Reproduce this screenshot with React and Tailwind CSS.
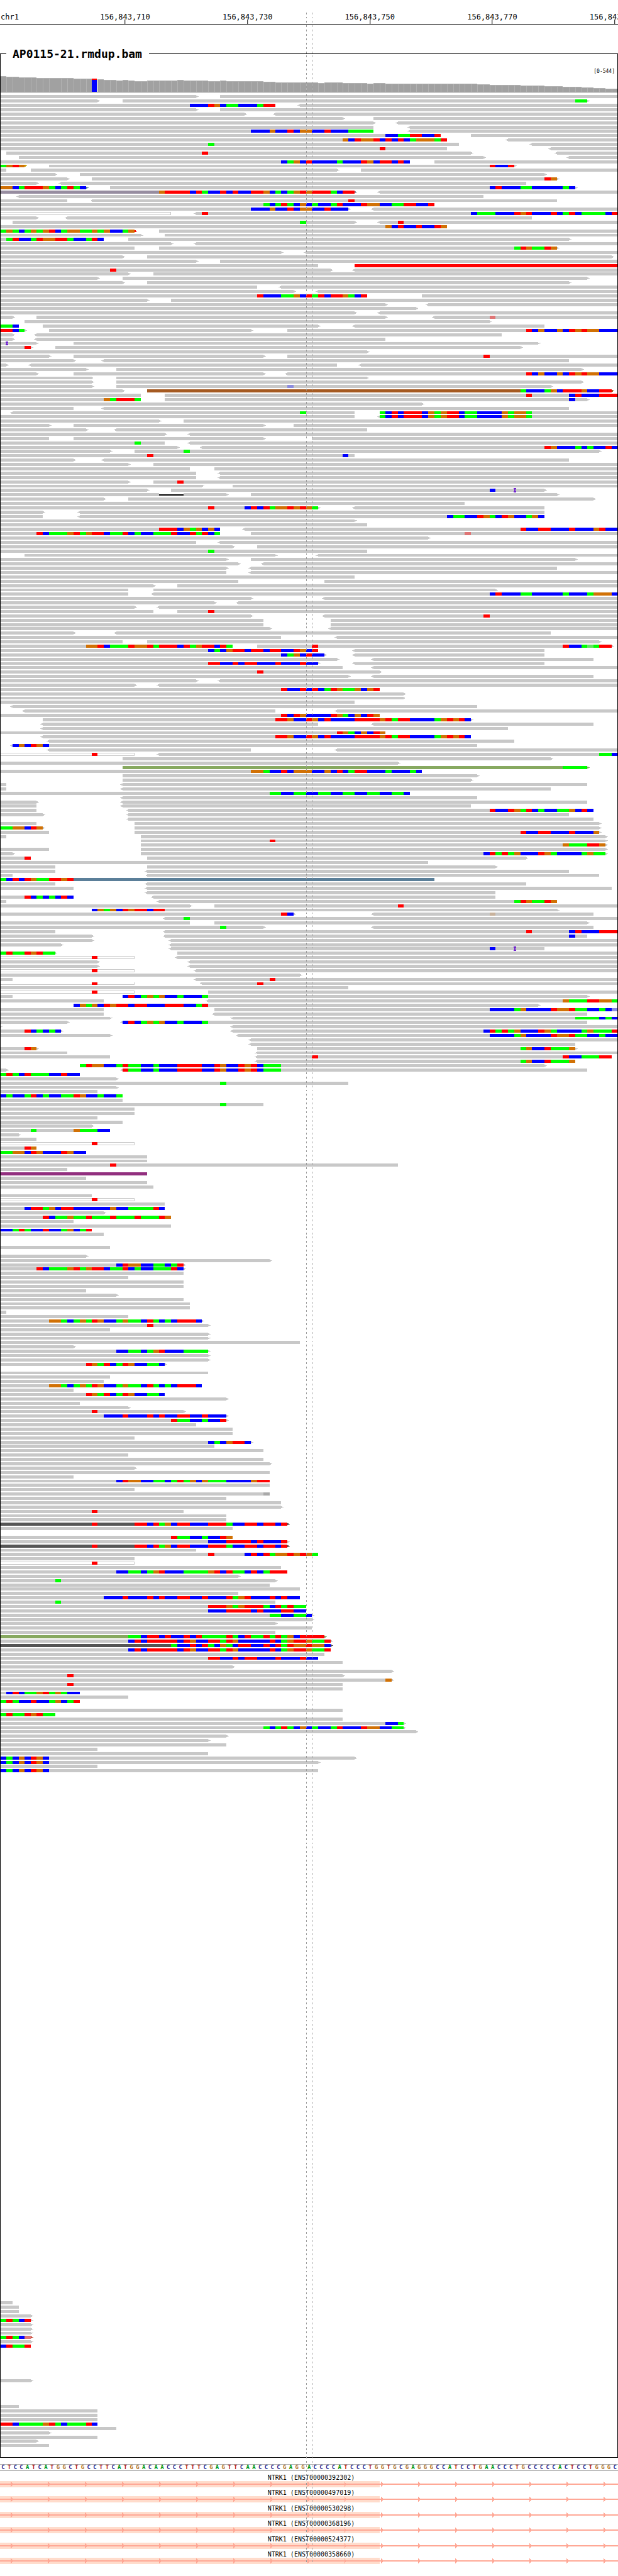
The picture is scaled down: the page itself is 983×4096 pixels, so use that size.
import React from "react";

const BASE = 9.9;
const BASES = 101;
const ROW = 7;
const READ_GREY = "#c8c8c8";

const NUCLEOTIDE = {
  A: "#00ff00",
  C: "#0000ff",
  G: "#d17105",
  T: "#ff0000",
  a: "#63e263",
  c: "#8c8cdf",
  g: "#c8b29c",
  t: "#df7575",
  n: "#a9a9a9",
};

const READ_COLOR = {
  k: "#555555",
  g: "#87a960",
  p: "#922f7f",
  m: "#978da0",
  o: "#a55a22",
  r: "#ff0000",
  s: "#5b7f99",
  y: "#c8a000",
  v: "#c8503a",
};

// Rows are separated by "/". Tokens inside a row:
//   [<]a-b[>]  read covering bases a..b, with strand arrows; an optional leading
//              letter picks a READ_COLOR ("h" is a hollow, low-quality read)
//   n:LETTERS  mismatches from base n; lower case is low base quality
//   in, da-b   insertion at n, deletion from a to b
const BLOCKS = [
  {
    first: 0,
    rows: `0-32> 36-101/0-16> 20-96> 94:AA/0-45 <49-101 31:CCCTGCAACCCATT/0-32> 36-101/0-40> <45-101
/0-56> 61-101/0-61> <65-101/0-61 <67-101/0-61 <67-101 41:CCCGCCTCGGCCTCCCAAAA/0-72 77-101 63:CCAATTCCT
/0-73 <83-101 56:GCTGGTCTCTCAGGGAT/0-75 <87-101 34:A/0-73 <90-101 62:T/1-77> <91-101 33:T/3-79> <93-101
/0-67 71-101 46:CAGCTCCCCACCCTGCTTCTC/y0-4> 8-84> 0:AGTG 80:TCCT/0-1 5-55> 59-101/0-9> 13-89>/0-11> 15-91> 89:TG
/0-6> <10-86/s0-14> 18-94> 0:GGCATTTGACATAC 80:CTCCCAACCCCCAC/m0-58> <62-101 26:GTTTTCTACCTCTCCTTGCACAGTGTTTACTT/<3-79/0-11 <15-91 57:T
/0-71 43:ACATACGCACCATCCCTGGCCAATTCCT/0-57> <61-101 41:CCCGCCTCGGCCTCCC/h0-28 <32-101 33:T 77:CAAACCCTGTCCCTCATCAAAACT/0-6> <11-87/2-58> <62-101 49:A 65:T
/0-73 63:GCTCCTCCTG/r0-22> 26-101 0:AGACAGAGTCAGGAAGAGCCAG/0-23> 27-101/0-17 21-93> 1:ATCCATGGTTACCATC/0-28> <32-101
/0-22 26-91> 84:ATGAATG/0-46> <50-101/0-20> 24-100>/0-32> 36-101/0-52 r58-101
/0-54> <58-101 18:T/0-21> 25-101/0-16> 20-96>/0-20> 24-93>/0-42 <46-101
/0-48> <52-101/0-60 69-101 42:TCCCAAGCTATCTTGACT/0-24> 28-101/0-63> <70-101/0-68>
/0-58> <62-101/0-2> 6-63> <71-101 80:t/4-80>/0-3 7-52> <58-89 0:AAC/0-4> 8-41> 47-101 0:TTCA 86:TCGCCGCTGTGGCCC
/0-2> <6-82/0-2> <6-63/0-6> 12-88> i1/0-5> 9-85> 4:T/0-60>
/0-8> 12-43> 47-101 79:T/0-12> <17-93/0-1> <5-55 <59-101/0-14> 19-95>/0-6> 12-43> <47-101 86:TCGCCGCTGTGGCCC
/0-15> 19-60>/0-15> 19-95>/0-15> 19-90> 47:c/0-20> o24-100> 85:ACCCAGCTTTGCCTT/0-23 27-101 86:T 93:CTCCCTTT
/0-23 27-96> 17:GATTTA 93:C/0-69>/0-12 <17-93/<2-58 62-101 49:A 62:ACTCTTTCGAGTTCAACCCCGAGGA/0-58 <62-101 62:ACTCTTTCGAGTTCAACCCCGAGGA
/0-26> 30-101/0-8> 12-43> 48-101/0-14> <19-60/0-27> <31-101/0-8 12-43> 51-101
/0-27 <31-101 22:A/0-29> <33-101 89:TGCCCACACCTC/0-18> 22-98> 30:A/0-58 24:T 56:C/0-12> <17-93
/0-21> 25-101/0-31 35-101/0-32 <36-101/0-32 <36-101/0-21> 25-101 29:T
/0-33> 38-101/0-24> 28-89> 80:C i84/0-26 30-37> 41-91> d26-30/0-17> 21-97>/0-76
/0-52> <58-89 34:T 40:CTCTAGGTGTGA/0-7> <13-89/0-7 <13-89 73:CAACCTGACTGCCAGC/0-58>/0-60
/0-36 <40-101 26:TTTCGAGCGC 85:TCCTTCCCTCCCGTCC/0-36 41-101 6:TCAAAGTAGTTCAATCACCAAATCCTATCA 76:t/0-70>/0-32 <36-101/0-38> 42-101
/0-60 34:A/4-45> <52-101/0-37> 41-94>/0-39> <43-101/0-37> <41-91
/0-37 <41-101/0-58/0-39 53-101/0-25> 29-101/0-21 25-81>
/0-21 <25-101 80:CTCCCAACCCCCACCCAGGGC/0-41> <53-101/0-35> <39-101/0-22> <26-101/0-25 29-101 34:T
/0-41> <53-101 79:T/0-43 54-101/0-43 54-101/0-44> <54-101/0-12> <19-90
/0-46 <55-101/0-20 24-98>/0-38 42-100> 14:GGTCAAATGGTATTTCTAGTTCTA 51:T 92:TCCAaATT/0-52 <58-89 34:CACGTTCTTCTTCCTGCT/0-53> <58-89 46:CAGCTCC
/0-55> <61-97/0-52> <58-89 34:TTCCTCTTCCCTCCCTCC/0-56 <61-101/0-62> 42:T/0-57> <61-97
/0-32> <36-101/0-22> <26-101/0-62 46:TCCTCTCATGAAGCGT/0-66>/0-66>
/0-58/<2-78/<4-45 <55-101/0-62 46:TCTGCCCCTGACGCTG/7-77> 45:TTGCCTGCTCCCCTTTTGTATTCCCCAGTGTC
/<7-52 <61-97/<7-83/0-63 55:TGACGCTG/<7-77 45:TTGCCTGCTCCCCTTTTGTATTCCCCAGTGTC/<8-84
/<2-78 2:CGCTGC/<8-41 <55-101/h0-22 <26-101 15:T 98:AAC/20-90>/0-65>
/g20-96> 92:AAAA/0-69 41:GGACCTCGGGCCGCTCATTCCCACCCAC/20-78>/20-77>/0-1 <20-96
/0-1 <20-90/0-67 44:AACCAACCAACCAACCAACCAAC/<20-78/0-6> <20-96/0-6 <20-77
/0-6 <21-97 80:TCCTGATCACCAAGCTC/0-7> <21-93/<21-97/0-6 22-98>/0-7> 22-98> 0:AAGGCTG
/0-8 22-98> 85:TCCTTCCCTCCCG/0-1 23-99>/23-99> 44:T/23-99> 92:GAAATTG/0-8 23-99>
/0-2> 23-99> 79:CTATAGCCCTGACCCCAGAA/0-5 24-86> 4:T/0-70/0-9 24-81>/0-9 <24-93
/0-2 <24-98/s0-71 0:ACTCTGAATTGT/0-9 <24-86/0-12 <24-100/<24-81
/0-12 <25-81 4:TCACACTC/0-1 <26-91 84:ATGAATG/0-31> 35-101 65:T/15-91> 15:CGAGCTGTTCTT/0-48> <61-97 46:TC 80:g
/<27-101 30:A/0-31 35-96>/0-43> <61-97 36:A/0-9 <27-101 86:T 93:CTCCCTTT/0-15> <27-96 93:C
/0-15> <28-101/0-10> <28-101/<28-89 80:C i84/0-9> 29-101 0:ATAATGTAA/h0-22 <29-101 15:T
/0-16> <31-101/0-16> <31-101/h0-22 <32-101 15:T/0-49>/0-2 <32-101 44:T
/h0-22 <33-101 15:T 42:T/0-57/h0-22 34-101 15:T/0-2 20-96> 20:CTCAGAGCCACCCA/0-17 <34-101 92:GAAATTGGA
/12-88> 12:CGAGCTGTTCTTCCCTTTCCAT/0-17 35-101 80:CCCCAGCCCCTGGTAACCACc/0-17 <35-96/0-18> <38-101 94:AAAACAC/0-11> <20-96 20:CTCAGAGCCACCCA
/0-0> <38-101/0-10> <38-101 4:TCACAC 79:CTATAGCCCTGACCCCAGAAAT/0-18> <39-101 80:CCCCAGCCCCTGGTAACCACC/<41-101/<41-94
/0-6> 42-94> 4:TG 85:AGCCTAAAG/0-11 <42-101/0-18 <42-100 51:T 92:TCCAAATT/<42-94 85:AGCCTAAAG/13-89> 13:ATGGCCATAACCACCCTTTTCCTGCCTGTCAAA
/0-1> <20-96 20:TAACCACCCTTTTCCTGCCTGTCAAA/0-13 0:ATACTAAACCTCC/0-19>/0-57 36:A/0-19>
/0-16/0-20 0:CACCATCACCAATGCCACCA/0-20/0-43 36:A/0-22
/0-22/0-16/0-20/0-15>/0-18 5:A 12:GAAACC
/0-3>/0-6/h0-22 15:T/0-6 4:TG/0-14 0:AAGGCTGCCCTGCC
/0-24/0-24/0-65 18:T/0-11/p0-24
/0-14/0-24/0-25//0-15
/h0-22 15:T/0-27/0-27 4:CTTAGCTTCCCCCCGCCAAAATC/0-17>/0-28 7:TCAAGAATAAATAAATAAATG
/0-12/0-28/0-15 0:CCATACCTCCAGCAT/0-17/
//0-18//0-14>/0-44>
/0-30> 19:CTGGCCAACAT/0-30> 6:TCAAAGTAGTTCAATCACCAAATC/0-30/0-21/0-30
/0-30/0-14/0-19>/0-30/0-31
/0-31/0-1/0-21/0-33> 8:GGACAGATGCCAGAACTACACTTTC/0-34> 24:T
/0-18/0-34>/0-34>/0-49/0-12>
/0-34> 19:CCAACAGTCCCAAAA/0-34>/0-34>/0-27> 14:TGATCATGCCAAC/
/0-34/0-18/0-17/0-33 8:GGACAGATGCCAGAACTACACTTTC/0-12
/0-27 14:TGATCATGCCAAC/0-37>/0-13/0-21>/0-30> 15:T
/0-37> 17:CCCTCCCTCTCCTTCCTCCC/0-37> 28:TAACCACCT/0-32/0-38/0-38
/0-22/0-41> 34:CACGTTC/0-35/0-43/0-21
/0-43/0-44>/0-22>/0-44/0-12
/0-44 19:CTGGCCAACATAGCGAAACCCCGTT/0-44/0-22/0-44 43:n/0-37
/0-46/0-46>/0-30 15:T/0-37/0-37
/k0-47> 15:T 22:TTCTAGCTTCCCTTTACCTTCTTCT/0-38//0-38 28:TAACCACCTG/0-47> 34:CCCTTTTCTCCCT
/k0-47> 15:T 22:TTCTAGCTTCCCTTTACCTTCTTCT/0-32/0-52 34:T 40:CTCTAGGTGTGA/0-22/h0-22 15:T
/0-46/0-47 19:CCAACAGTCCCAAAAGTCTAACTCATTT/0-39>/0-45> 9:A/0-44
/0-49/0-39/0-49 17:CCCTCCCTCTCCTTCCTCCCTAGTCCCTCTCC/0-45 9:A/0-50 34:TTTGAGTTTACTATAA
/0-50 34:CCCTTTTCTCCCTTCC/0-51> 44:AACCAAC/0-51>/0-45>/0-51
/0-45/g0-53> 21:AACTTCTCCTCTAAAATACTAATATAGCTTTT/0-54> 21:CTCTTTTTCTGCCTTATGCCCCCTCAGTTGAAT/k0-54> 28:ACCTCTACGACTTCCTCTATGGTGGC/0-54 21:CTCTTTTTCTGCCTTATGCCCCCTCAGTTGAAT
/0-53/0-52 34:TTCCTCTTCCCTCCCTCC/0-56/0-38>/0-64>
/0-56> 11:T/0-64> 63:G/0-56 11:T/0-56/0-13 1:CTCAAGTAGACC
/0-21/0-13 0:ATACCTCCAGCAT//0-56/0-9 0:ATAATGTAA
/0-56/0-66> 63:CCA/0-66> 43:ACATACGCACCATCCCTGGCCAA/0-68>/0-37>
/0-34>/0-37/0-16/0-34/0-58> 0:CACGCTGC
/0-52> 0:CACGCTGC/0-16/0-52 0:CACGCTGC`,
  },
  {
    first: 510,
    rows: `0-2/0-3/0-3/0-5>/0-5> 0:ATACT/0-5>/0-5>/0-5>/v0-5> 0:ATACt/0-5>
/0-5 0:CTAAT////////0-5>//////0-3/0-16/0-16/0-16/0-16 0:TTCAAAAGTACAAATC/0-19/0-8>/0-16/0-6>/0-8`,
  },
];

// Coverage heights as [height, number of bases].
const COVERAGE = [
  [25, 1], [24, 2], [23, 3], [22, 6], [21, 4], [20, 1], [19, 2], [18, 1], [19, 1], [18, 1],
  [17, 2], [18, 5], [19, 1], [18, 4], [17, 2], [18, 1], [17, 6], [16, 2], [15, 7], [14, 1],
  [15, 3], [14, 4], [13, 1], [14, 2], [13, 15], [12, 2], [11, 5], [10, 4], [9, 3], [8, 3],
  [7, 2], [6, 2], [5, 2],
].flatMap(([h, n]) => Array(n).fill(h));

const REFERENCE =
  "CTCCATCATGGCTGCCTTCATGGACAACCCTTTCGAGTTCAACCCCGAGGACCCCATCCCTGGTGCGAGGGCCATCCTGAACCCTGCCCCCACTCCTGGGC";

const LETTER_CLASS = {
  A: "text-[#009a1a]",
  C: "text-[#1a1a8c]",
  G: "text-[#b0701a]",
  T: "text-[#b01414]",
};

const TICKS = [
  { label: "156,843,710", at: 20.25 },
  { label: "156,843,730", at: 40.05 },
  { label: "156,843,750", at: 59.85 },
  { label: "156,843,770", at: 79.65 },
  { label: "156,843,790", at: 99.45 },
];

const TRANSCRIPTS = [
  "ENST00000392302",
  "ENST00000497019",
  "ENST00000530298",
  "ENST00000368196",
  "ENST00000524377",
  "ENST00000358660",
];

function toX(base) {
  return Math.round(base * BASE);
}

function drawToken(token, y, key) {
  const mismatch = token.match(/^(\d+):([A-Za-z]+)$/);
  if (mismatch) {
    const runs = mismatch[2].match(/(.)\1*/g);
    let at = Number(mismatch[1]);
    return runs.map((run, i) => {
      const x = toX(at);
      at += run.length;
      return <rect key={key + "-" + i} x={x} y={y} width={toX(at) - x} height="5" fill={NUCLEOTIDE[run[0]]} />;
    });
  }
  const insertion = token.match(/^i(\d+)$/);
  if (insertion) {
    const x = toX(Number(insertion[1])) + 1;
    return <path key={key} d={`M${x - 2} ${y - 1}h4v2h-1v3h1v2h-4v-2h1v-3h-1z`} fill="#7022d0" />;
  }
  const deletion = token.match(/^d(\d+)-(\d+)$/);
  if (deletion) {
    const x = toX(Number(deletion[1]));
    return <rect key={key} x={x} y={y + 2} width={toX(Number(deletion[2])) - x} height="2" fill="#000" />;
  }
  const [, kind, left, from, to, right] = token.match(/^([a-z]?)(<?)(\d+)-(\d+)(>?)$/);
  const fill = READ_COLOR[kind] || READ_GREY;
  const a = toX(Number(from));
  const b = toX(Number(to));
  let d = `M${a} ${y}H${b}v5H${a}z`;
  if (right) d += `M${b} ${y + 1}h2v1h2v1h-2v1h-2z`;
  if (left) d += `M${a} ${y + 1}h-2v1h-2v1h2v1h2z`;
  return (
    <React.Fragment key={key}>
      <path d={d} fill={fill} />
      {kind === "h" && <rect x={a} y={y + 1} width={b - a - 1} height="3" fill="#fff" />}
    </React.Fragment>
  );
}

function Reads() {
  return BLOCKS.map((block) => (
    <g key={block.first}>
      {block.rows.split("/").map((row, r) => {
        const y = 154 + ROW * (block.first + r);
        const tokens = row.trim().split(/\s+/).filter(Boolean);
        return tokens.map((token, t) => drawToken(token, y, r + "." + t));
      })}
    </g>
  ));
}

function Coverage() {
  return (
    <g>
      {COVERAGE.map((h, i) => {
        const x = toX(i);
        const w = toX(i + 1) - x;
        const top = 148 - h;
        if (i === 15) {
          return (
            <g key={i}>
              <rect x={x} y={top} width={w - 1} height="2" fill="#ff0000" />
              <rect x={x} y={top + 2} width={w - 1} height={h - 2} fill="#0000ff" />
            </g>
          );
        }
        return (
          <g key={i}>
            <rect x={x} y={top} width={w} height={h} fill="#b2b2b2" />
            <rect x={x + 1} y={top + 1} width={w - 1} height={h - 1} fill="#a1a1a1" />
          </g>
        );
      })}
      <rect x="0" y="148" width="1000" height="1" fill="#777" />
    </g>
  );
}

function Ruler() {
  return (
    <header className="relative h-[39px] overflow-hidden border-b border-black text-[12px] leading-[14px]">
      <span className="absolute left-px top-5">chr1</span>
      {TICKS.map((tick) => (
        <div
          key={tick.label}
          className="absolute bottom-0 flex -translate-x-1/2 flex-col items-center"
          style={{ left: tick.at + "%" }}
        >
          <span className="-mb-[3px]">{tick.label}</span>
          <span className="h-[7px] w-px bg-black" />
        </div>
      ))}
    </header>
  );
}

function Sequence() {
  return (
    <div className="mt-[10px] flex border-y border-[#a8a8a8] text-[9px] leading-[9px]">
      {REFERENCE.split("").map((letter, i) => (
        <span key={i} className={"min-w-0 flex-1 text-center font-bold " + LETTER_CLASS[letter]}>
          {letter}
        </span>
      ))}
    </div>
  );
}

function Transcript({ id }) {
  return (
    <div className="flex flex-col justify-end">
      <div className="pl-[7px] text-center text-[10px] leading-[10px]">NTRK1 ({id})</div>
      <svg viewBox="0 0 1000 10" className="block w-full" shapeRendering="crispEdges" aria-hidden="true">
        <rect x="0" y="0" width="614" height="10" fill="#ffdccc" />
        <rect x="0" y="4" width="1000" height="2" fill="#ffa896" />
        {Array.from({ length: 17 }, (_, i) => (
          <path key={i} d={`M${17 + 60 * i} 1h1v1h1v1h1v4h-1v1h-1v1h-1z`} fill="#ffa896" />
        ))}
      </svg>
    </div>
  );
}

export default function App() {
  return (
    <main className="relative w-full overflow-hidden bg-white pb-[19px] font-['DejaVu_Sans_Mono',monospace] text-black">
      <Ruler />
      <fieldset className="mt-[36px] min-w-0 border border-black">
        <legend className="ml-[9px] px-[10px] pr-[11px] text-[18px] font-bold leading-[21px]">AP0115-21.rmdup.bam</legend>
        <div className="pb-[3px] pr-[4px] pt-[13px] text-right text-[8px] leading-[9px]">[0-544]</div>
        <svg
          viewBox="1 123 998 3853"
          preserveAspectRatio="none"
          className="block aspect-[981/3786] w-full"
          shapeRendering="crispEdges"
          role="img"
          aria-label="Read coverage and alignments"
        >
          <Coverage />
          <Reads />
        </svg>
      </fieldset>
      <Sequence />
      <section className="mt-px grid aspect-[983/147] grid-rows-6">
        {TRANSCRIPTS.map((id) => (
          <Transcript key={id} id={id} />
        ))}
      </section>
      <svg
        viewBox="0 0 1000 4168"
        preserveAspectRatio="none"
        className="pointer-events-none absolute inset-0 h-full w-full"
        shapeRendering="crispEdges"
        aria-hidden="true"
      >
        <path d="M495.5 20V4146M505.5 20V4146" stroke="#999" strokeWidth="1" strokeDasharray="3 4" />
      </svg>
    </main>
  );
}
